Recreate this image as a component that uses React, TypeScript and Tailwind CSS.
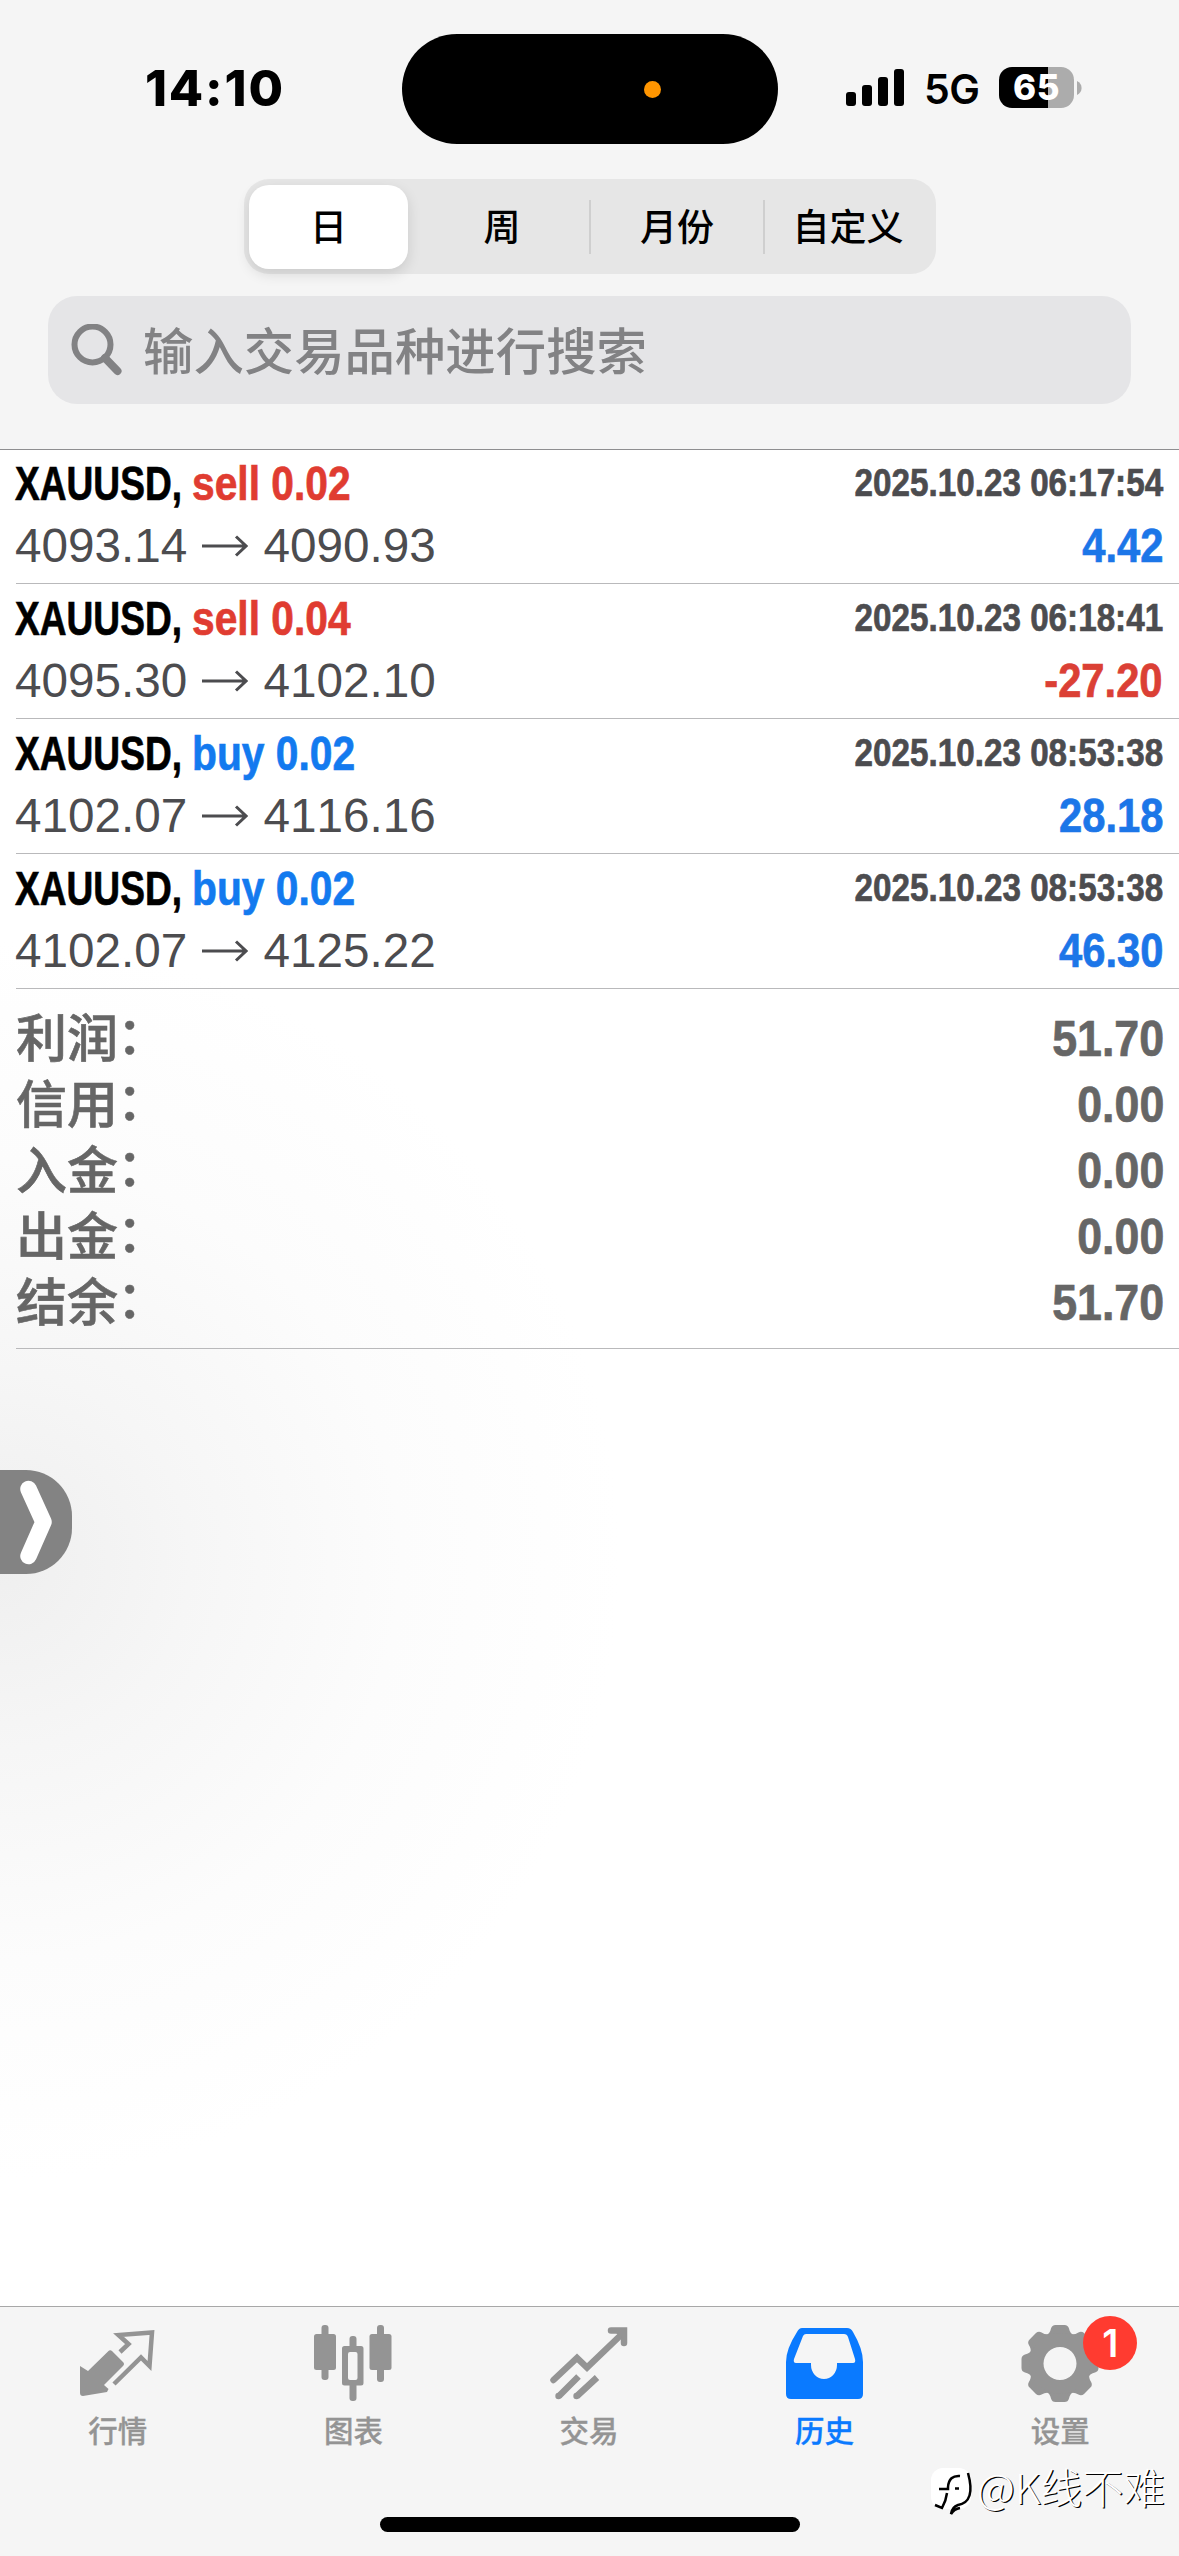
import { clsx } from 'clsx';
import type { ReactNode } from 'react';

type Deal = {
  side: 'buy' | 'sell';
  volume: string;
  open: string;
  close: string;
  time: string;
  profit: string;
};

const periods = ['日', '周', '月份', '自定义'];

const deals: Deal[] = [
  { side: 'sell', volume: '0.02', open: '4093.14', close: '4090.93', time: '2025.10.23 06:17:54', profit: '4.42' },
  { side: 'sell', volume: '0.04', open: '4095.30', close: '4102.10', time: '2025.10.23 06:18:41', profit: '-27.20' },
  { side: 'buy', volume: '0.02', open: '4102.07', close: '4116.16', time: '2025.10.23 08:53:38', profit: '28.18' },
  { side: 'buy', volume: '0.02', open: '4102.07', close: '4125.22', time: '2025.10.23 08:53:38', profit: '46.30' },
];

const totals = [
  { label: '利润', value: '51.70' },
  { label: '信用', value: '0.00' },
  { label: '入金', value: '0.00' },
  { label: '出金', value: '0.00' },
  { label: '结余', value: '51.70' },
];

function StatusBar() {
  return (
    <div className="flex h-[179px] items-start font-['Inter','Noto_Sans',sans-serif]">
      <div className="w-[402px] pt-[58px] pl-[145px] text-[50px] leading-[60px] font-extrabold tracking-[1.8px]">14:10</div>
      <div className="mt-[34px] flex h-[110px] w-[376px] items-center rounded-full bg-black">
        <span className="ml-[242px] h-[17px] w-[17px] rounded-full bg-[#ff9500]" />
      </div>
      <div className="mt-[67px] ml-[68px] flex h-[41px] items-center">
        <svg width="58" height="37" viewBox="0 0 58 37" className="fill-black">
          <rect x="0" y="23" width="10" height="14" rx="3" />
          <rect x="16" y="16" width="10" height="21" rx="3" />
          <rect x="32" y="8" width="10" height="29" rx="3" />
          <rect x="48" y="0" width="10" height="37" rx="3" />
        </svg>
        <span className="mt-[3px] ml-[20px] w-[75px] text-[41px] leading-[41px] font-semibold tracking-[-0.5px]">5G</span>
        <div className="flex h-[41px] w-[75px] items-center justify-center rounded-[13px] bg-[linear-gradient(to_right,#000_49px,#acacac_49px)] text-[35px] font-extrabold tracking-[0.5px] text-white">
          65
        </div>
        <svg width="5" height="14" viewBox="0 0 5 14" className="ml-[3px]">
          <path d="M0 0C3 1.5 4.6 4 4.6 7S3 12.5 0 14Z" fill="#acacac" />
        </svg>
      </div>
    </div>
  );
}

function PeriodPicker() {
  return (
    <div className="mx-auto flex h-[95px] w-[692px] items-center rounded-[25px] bg-[#e6e6e6] p-[5px] text-[37px] font-medium">
      {periods.map((period, i) => (
        <div
          key={period}
          className={clsx(
            'flex items-center justify-center',
            i === 0 && 'mr-[7px] h-[84px] w-[159px] rounded-[20px] bg-white shadow-[0_5px_14px_rgba(0,0,0,0.12)]',
            i === 1 && 'h-[54px] w-[176px] border-r-2 border-[#cfcfcf]',
            i === 2 && 'h-[54px] w-[174px] border-r-2 border-[#cfcfcf]',
            i === 3 && 'h-[54px] flex-1',
          )}
        >
          <span className="mt-[5px] ml-px">{period}</span>
        </div>
      ))}
    </div>
  );
}

function SearchField() {
  return (
    <div className="mx-[48px] mt-[22px] flex h-[108px] items-center rounded-[29px] bg-[#e5e5e7] pl-[23px] text-[50.4px] text-[#828284]">
      <svg width="52" height="52" viewBox="0 0 52 52" fill="none" stroke="currentColor" className="-mt-[1px] mr-[20px]">
        <circle cx="21.5" cy="20.5" r="18" strokeWidth="6" />
        <path d="M34 34L46.5 47" strokeWidth="8" strokeLinecap="round" />
      </svg>
      <span className="mt-[7px] leading-none font-medium">输入交易品种进行搜索</span>
    </div>
  );
}

// Squeezes a run of text so that it reads like a condensed face
function Narrow({ className, children }: { className: string; children: ReactNode }) {
  return (
    <span className={clsx('block font-bold whitespace-nowrap [-webkit-text-stroke:0.7px_currentColor]', className)}>
      {children}
    </span>
  );
}

function DealRow({ deal }: { deal: Deal }) {
  return (
    <div className="ml-[16px] h-[135px] border-b border-[#b9b9bb] pr-[16px] text-[48.5px] leading-[56px] first:-mt-px">
      <div className="flex justify-between pt-[7px]">
        <div className="-mt-px -ml-px flex">
          <Narrow className="w-[177px] origin-left scale-x-[0.765]">XAUUSD,</Narrow>
          <Narrow
            className={clsx(
              'origin-left scale-x-[0.84]',
              deal.side === 'sell' ? 'text-[#e03c31]' : 'text-[#137aef]',
            )}
          >
            {deal.side} {deal.volume}
          </Narrow>
        </div>
        <Narrow className="-mt-px origin-right scale-x-[0.852] text-[39px] text-[#4c4c4f]">{deal.time}</Narrow>
      </div>
      <div className="flex justify-between pt-[7px]">
        <div className="-ml-px flex items-center text-[47.7px] text-[#4c4c4f]">
          <span>{deal.open}</span>
          <svg width="46" height="22" viewBox="0 0 46 22" fill="none" stroke="currentColor" strokeWidth="3" className="mr-[15px] ml-[15px]">
            <path d="M0 11H44M34 1.5L44 11L34 20.5" />
          </svg>
          <span className="[font-kerning:none]">{deal.close}</span>
        </div>
        <Narrow
          className={clsx(
            '-mt-px origin-right scale-x-[0.86]',
            deal.profit.startsWith('-') ? 'text-[#db4035]' : 'text-[#1c76e8]',
          )}
        >
          {deal.profit}
        </Narrow>
      </div>
    </div>
  );
}

function Totals() {
  return (
    <div className="ml-[16px] h-[360px] border-b border-[#b9b9bb] pt-[17px] pr-[15px] text-[#666]">
      {totals.map((row) => (
        <div key={row.label} className="flex h-[66px] items-center justify-between">
          <span className="flex pt-[2px] text-[51px] font-medium [-webkit-text-stroke:0.6px_currentColor]">
            {row.label}
            <span className="-mt-[3px] -ml-[1px]">：</span>
          </span>
          <Narrow className="origin-right scale-x-[0.895] text-[50px]">{row.value}</Narrow>
        </div>
      ))}
    </div>
  );
}

function QuotesIcon() {
  return (
    <svg width="76" height="78" viewBox="0 0 76 78">
      <path d="M0 41L8 46L28 26.500Q30 24.500 32 26L43 37Q45 39 43 41L24 60L28.500 64L27 67L3 71Q0 71 0 68Z" fill="currentColor" />
      <path d="M40 27L48.500 19L38.500 10L72 7.500L69.500 41L61 32.500L34 59" fill="none" stroke="currentColor" strokeWidth="4.500" />
    </svg>
  );
}

function ChartIcon() {
  return (
    <svg width="78" height="78" viewBox="0 0 78 78" fill="currentColor">
      <rect x="7.500" y="0" width="7" height="55" rx="3" />
      <rect x="0" y="9" width="22" height="36" rx="2.500" />
      <rect x="63" y="0" width="7" height="57" rx="3" />
      <rect x="55.500" y="9" width="22" height="36" rx="2.500" />
      <rect x="35.500" y="11" width="7" height="15" rx="3" />
      <rect x="35.500" y="57" width="7" height="19" rx="3" />
      <path fillRule="evenodd" d="M30.500 21H47Q49.500 21 49.500 23.500V58Q49.500 60.500 47 60.500H30.500Q28 60.500 28 58V23.500Q28 21 30.500 21ZM36 27Q34 27 34 29V53Q34 55 36 55H41.500Q43.500 55 43.500 53V29Q43.500 27 41.500 27Z" />
    </svg>
  );
}

function TradeIcon() {
  return (
    <svg width="78" height="78" viewBox="0 0 78 78" fill="none" stroke="currentColor" strokeWidth="6.500">
      <path d="M3.500 55L27 33L37 42.500L72 9" strokeLinecap="round" />
      <path d="M61 5.500H74V18" strokeLinecap="round" />
      <path d="M66 8L74 4V14Z" fill="currentColor" stroke="none" />
      <path d="M9 71L28.500 51.500M27 71L47 52.500" />
      <circle cx="8.500" cy="71" r="3.200" fill="currentColor" stroke="none" />
      <circle cx="26.500" cy="71" r="3.200" fill="currentColor" stroke="none" />
    </svg>
  );
}

function HistoryIcon() {
  return (
    <svg width="78" height="78" viewBox="0 0 78 78" fill="currentColor">
      <path fillRule="evenodd" d="M16 3H61Q65 3 67 7Q77 24 77 37V69Q77 74 72 74H5Q0 74 0 69V37Q0 24 11 7Q13 3 16 3ZM20 9Q18 9 17 11L8 34Q7 38 10 38H25V40A13 14 0 0 0 51 40V38H67Q70 38 69 34L62 12Q61 9 58 9Z" />
    </svg>
  );
}

function SettingsIcon() {
  return (
    <svg width="78" height="78" viewBox="-39 -38.500 78 78" fill="currentColor">
      {[0, 45, 90, 135, 180, 225, 270, 315].map((angle) => (
        <path key={angle} transform={`rotate(${angle})`} d="M-14 -28Q-10 -30 -9 -35Q-8 -38.500 -4.500 -38.500H4.500Q8 -38.500 9 -35Q10 -30 14 -28L8 -22H-8Z" />
      ))}
      <path fillRule="evenodd" d="M0 -30.500A30.500 30.500 0 1 1 0 30.500A30.500 30.500 0 1 1 0 -30.500ZM0 -16.500A16.500 16.500 0 1 0 0 16.500A16.500 16.500 0 1 0 0 -16.500Z" />
    </svg>
  );
}

const tabs = [
  { label: '行情', icon: <QuotesIcon /> },
  { label: '图表', icon: <ChartIcon /> },
  { label: '交易', icon: <TradeIcon /> },
  { label: '历史', icon: <HistoryIcon />, active: true },
  { label: '设置', icon: <SettingsIcon />, badge: '1' },
];

function TabBar() {
  return (
    <nav className="relative flex h-[250px] flex-col items-center border-t border-[#a8a8a8] bg-[#f5f5f5]">
      <div className="grid h-[210px] w-[1178px] grid-cols-5 self-start">
        {tabs.map((tab) => (
          <div
            key={tab.label}
            className={clsx('flex flex-col items-center pt-[18px]', tab.active ? 'text-[#0a7aff]' : 'text-[#949494]')}
          >
            <div className="relative">
              {tab.icon}
              {tab.badge && (
                <span className="absolute -top-[9px] left-[62px] flex h-[54px] w-[54px] items-center justify-center rounded-full bg-[#ff3b30] font-['Inter',sans-serif] text-[38px] font-semibold text-white">
                  {tab.badge}
                </span>
              )}
            </div>
            <span className="mt-[9px] text-[29.500px] leading-[40px] font-medium [-webkit-text-stroke:0.3px_currentColor]">
              {tab.label}
            </span>
          </div>
        ))}
      </div>
      <div className="h-[15px] w-[420px] rounded-full bg-black" />
      <Watermark />
    </nav>
  );
}

function Watermark() {
  return (
    <div className="absolute top-[158px] left-[930px] flex items-start text-white">
      <svg width="46" height="54" viewBox="0 0 46 54">
        <rect x="1" y="3" width="40" height="41" rx="12" fill="#fff" />
        <path d="M38 8Q46 37 28 40Q22 42 21 49Q24 44 30 43" fill="none" stroke="#000" strokeWidth="2.500" />
        <path d="M30 11Q19 10 18 22V24H9M17 28Q16 36 12 43L5 40M25 23.500H29" fill="none" stroke="#000" strokeWidth="2.500" />
      </svg>
      <span className="-mt-[3px] ml-[1px] font-['Noto_Sans_CJK_SC',sans-serif] text-[41.500px] leading-[48px] font-light whitespace-nowrap [text-shadow:1.200px_1.200px_0_#000]">
        @K线不难
      </span>
    </div>
  );
}

export default function App() {
  return (
    <div className="relative flex h-[2556px] w-[1179px] flex-col overflow-hidden bg-white font-['Liberation_Sans','Noto_Sans_CJK_SC',sans-serif] text-black">
      <header className="h-[450px] border-b border-[#8e8e90] bg-[#f5f5f5]">
        <StatusBar />
        <PeriodPicker />
        <SearchField />
      </header>
      <main className="flex-1 bg-[radial-gradient(circle_at_0_1110px,#efefef_0,#f6f6f6_190px,#fcfcfc_400px,#ffffff_620px)]">
        {deals.map((deal, i) => (
          <DealRow key={i} deal={deal} />
        ))}
        <Totals />
      </main>
      <TabBar />

      {/* Side drawer handle */}
      <div className="absolute top-[1470px] left-0 h-[104px] w-[72px] rounded-r-[46px] bg-[#838383]">
        <svg width="72" height="104" viewBox="0 0 72 104" fill="none" stroke="#fff" strokeWidth="16.500" strokeLinecap="round" strokeLinejoin="round">
          <path d="M28.500 19L43.500 52L28.500 86" />
        </svg>
      </div>
    </div>
  );
}
